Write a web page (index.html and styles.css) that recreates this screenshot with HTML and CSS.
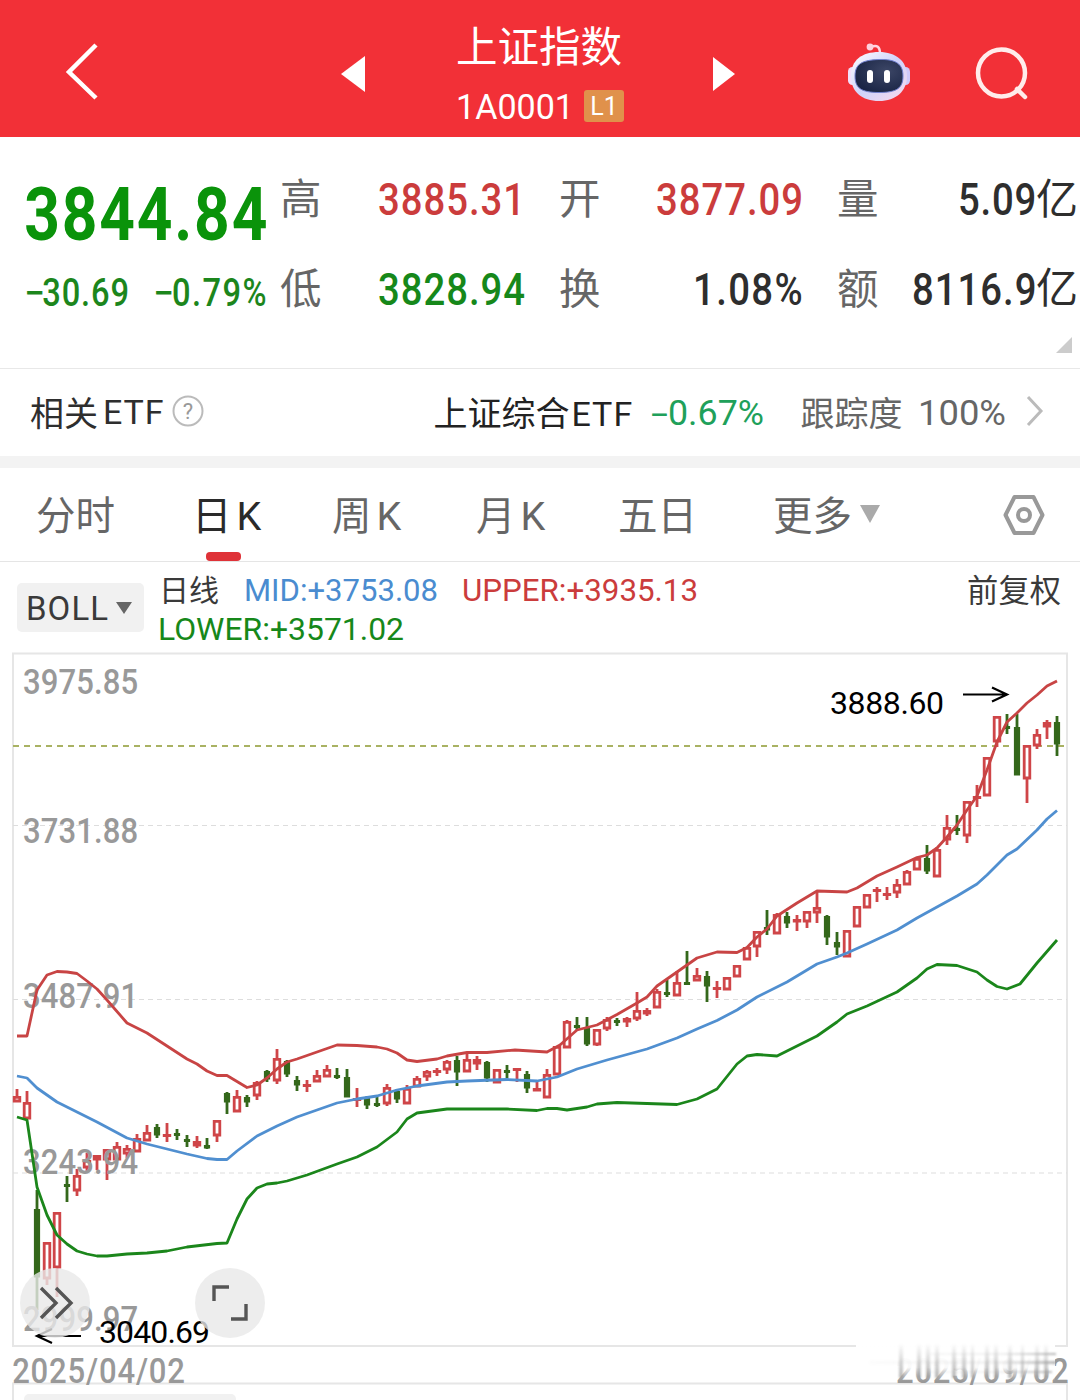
FILE: index.html
```html
<!DOCTYPE html>
<html lang="zh-CN">
<head>
<meta charset="utf-8">
<title>上证指数</title>
<link rel="stylesheet" href="styles.css">
</head>
<body>
<header class="topbar">
  <svg class="back" width="34" height="58" viewBox="0 0 34 58"><path d="M31 2 4 29 31 55"/></svg>
  <svg class="prev" width="24" height="36" viewBox="0 0 24 36"><path d="M24 0V36L0 18Z"/></svg>
  <div class="title">
    <h1>上证指数</h1>
    <div class="code"><svg width="118" height="34"><text x="0" y="30" textLength="118" lengthAdjust="spacingAndGlyphs">1A0001</text></svg><span class="level">L1</span></div>
  </div>
  <svg class="next" width="22" height="34" viewBox="0 0 22 34"><path d="M0 0V34L22 17Z"/></svg>
  <svg class="robot" width="64" height="60" viewBox="0 0 64 60">
    <defs>
      <linearGradient id="shell" x1="0" y1="0" x2="1" y2="1"><stop offset="0" stop-color="#fff"/><stop offset=".5" stop-color="#cfd3fb"/><stop offset="1" stop-color="#fbd9ec"/></linearGradient>
      <radialGradient id="visor" cx=".65" cy=".35" r=".7"><stop offset="0" stop-color="#3c4666"/><stop offset="1" stop-color="#1a2545"/></radialGradient>
    </defs>
    <path d="M24 5Q33 1 33 12" fill="none" stroke="#ffd5e2" stroke-width="2.5"/>
    <circle cx="23" cy="5" r="3.4" fill="#ffd0dc"/>
    <rect x="1" y="25" width="9" height="18" rx="4.500" fill="#f2dffb"/><rect x="54" y="25" width="9" height="18" rx="4.500" fill="#cfc9fa"/>
    <path d="M32 10C49 10 60 19 60 34S49 59 32 59 4 50 4 34 15 10 32 10Z" fill="url(#shell)"/>
    <path d="M32 17.500C49 17 56 22 56 34S50 50.500 32 50.500 8 46 8 34 15 18 32 17.500Z" fill="url(#visor)" stroke="#7181cf"/>
    <rect x="20" y="28" width="6" height="13" rx="3" fill="#fff"/><rect x="37" y="28" width="6" height="13" rx="3" fill="#fff"/>
  </svg>
  <svg class="search" width="56" height="56" viewBox="0 0 56 56"><circle cx="26.500" cy="27" r="23.500"/><path d="M42 43 50 51" stroke-linecap="round"/></svg>
</header>

<section class="quote">
  <div class="price">
    <svg width="242" height="60"><text class="last" x="-1" y="56" transform="scale(.83 1)" textLength="293">3844.84</text></svg>
    <svg width="242" height="34"><g class="change" transform="scale(.86 1)"><text x="20" y="30" textLength="101">30.69</text><text x="-1" y="30" textLength="24" lengthAdjust="spacingAndGlyphs">−</text><text x="149" y="30" textLength="24" lengthAdjust="spacingAndGlyphs">−</text><text x="171" y="30" textLength="110">0.79%</text></g></svg>
  </div>
  <div class="stats">
    <div class="stat"><span>高</span><svg width="146" height="44"><text class="up" transform="scale(.87 1)" y="38" textLength="169">3885.31</text></svg></div>
    <div class="stat"><span>开</span><svg width="146" height="44"><text class="up" transform="scale(.87 1)" y="38" textLength="169">3877.09</text></svg></div>
    <div class="stat wide"><span>量</span><div class="amount"><svg width="78" height="44"><text transform="scale(.87 1)" y="38" textLength="90">5.09</text></svg><b>亿</b></div></div>
    <div class="stat"><span>低</span><svg width="146" height="44"><text class="down" transform="scale(.87 1)" y="38" textLength="169">3828.94</text></svg></div>
    <div class="stat"><span>换</span><svg width="109" height="44"><text transform="scale(.87 1)" y="38" textLength="126">1.08%</text></svg></div>
    <div class="stat wide"><span>额</span><div class="amount"><svg width="124" height="44"><text transform="scale(.87 1)" y="38" textLength="143">8116.9</text></svg><b>亿</b></div></div>
  </div>
  <svg class="corner" width="16" height="16"><path d="M16 0V16H0Z"/></svg>
</section>

<section class="etf">
  <span>相关</span><span class="latin">ETF</span>
  <svg class="help" width="32" height="32"><circle cx="16" cy="16" r="14.500"/><text x="16" y="24" text-anchor="middle">?</text></svg>
  <span class="fund">上证综合<span>ETF</span></span>
  <svg width="113" height="36"><text class="rate" x="0" y="32" textLength="17" lengthAdjust="spacingAndGlyphs">-</text><text class="rate" x="17" y="32" textLength="96" lengthAdjust="spacingAndGlyphs">0.67%</text></svg>
  <span class="track">跟踪度</span>
  <svg width="88" height="36"><text class="pct" x="0" y="32" textLength="88" lengthAdjust="spacingAndGlyphs">100%</text></svg>
  <svg class="more" width="18" height="32"><path d="M2 2 15 16 2 30"/></svg>
</section>

<nav class="tabs">
  <a>分时</a><a class="active">日<i>K</i></a><a>周<i>K</i></a><a>月<i>K</i></a><a>五日</a><a>更多<svg width="20" height="18"><path d="M0 0H20L10 18Z"/></svg></a>
  <svg class="gear" width="42" height="42"><path d="M11.500 3H30.500L39.500 21 30.500 39H11.500L2.500 21Z"/><circle cx="21" cy="21" r="6"/></svg>
</nav>

<section class="indicator">
  <div class="picker"><svg width="82" height="30"><text x="-1" y="27" textLength="82">BOLL</text></svg><svg class="arrow" width="16" height="12"><path d="M0 0H16L8 12Z"/></svg></div>
  <div class="readout">
    <div class="line"><span>日线</span><svg class="mid" width="193" height="34"><text x="-1" y="28" textLength="194" lengthAdjust="spacingAndGlyphs">MID:+3753.08</text></svg><svg class="upper" width="235" height="34"><text x="-1" y="28" textLength="236" lengthAdjust="spacingAndGlyphs">UPPER:+3935.13</text></svg></div>
    <div class="line"><svg class="lower" width="245" height="34"><text x="-1" y="28" textLength="246" lengthAdjust="spacingAndGlyphs">LOWER:+3571.02</text></svg></div>
  </div>
  <span class="adjust">前复权</span>
</section>

<main class="chart">
  <svg width="1080" height="748" viewBox="0 652 1080 748">
    <defs>
      <linearGradient id="fade" x1="0" y1="0" x2="0" y2="1"><stop offset="0" stop-color="#fff"/><stop offset=".62" stop-color="#fff" stop-opacity=".95"/><stop offset=".9" stop-color="#fff" stop-opacity=".2"/><stop offset="1" stop-color="#fff" stop-opacity="0"/></linearGradient>
      <linearGradient id="streak" x1="0" y1="0" x2="0" y2="1"><stop offset="0" stop-color="#999" stop-opacity=".05"/><stop offset="1" stop-color="#999" stop-opacity=".7"/></linearGradient>
      <linearGradient id="haze" gradientUnits="userSpaceOnUse" x1="870" y1="0" x2="1056" y2="0"><stop offset="0" stop-color="#aaa" stop-opacity=".04"/><stop offset=".7" stop-color="#aaa" stop-opacity=".16"/><stop offset="1" stop-color="#999" stop-opacity=".7"/></linearGradient>
      <filter id="soft"><feGaussianBlur stdDeviation="1"/></filter>
    </defs>
    <g class="frame"><path d="M13 653.500H1067V1346H13Z"/><path d="M13 1400V1383.500H1067V1400"/></g>
    <rect x="24" y="1394" width="212" height="12" rx="5" fill="#f1f1f1"/>
    <path class="grid" d="M13 825.500H1067M13 999.500H1067M13 1173H1067"/>
    <path class="current" d="M13 746H1067"/>
    <g id="candles"></g>
    <g class="scale" transform="scale(.9 1)">
      <text x="25.500" y="694" textLength="128">3975.85</text>
      <text x="25.500" y="843" textLength="128">3731.88</text>
      <text x="25.500" y="1008" textLength="128">3487.91</text>
      <text x="25.500" y="1174" textLength="128">3243.94</text>
      <text x="25.500" y="1331" textLength="128">2999.97</text>
      <text x="13.500" y="1383" textLength="192">2025/04/02</text>
      <text x="995.500" y="1383" textLength="192">2025/09/02</text>
    </g>
    <rect x="856" y="1345" width="199" height="36" fill="url(#fade)"/>
    <g filter="url(#soft)">
      <path fill="url(#streak)" d="M899 1345h4v33h-4zM917 1345h4v33h-4zM926 1345h4v33h-4zM935 1345h4v33h-4zM952 1345h4v33h-4zM962 1345h4v33h-4zM971 1345h3v33h-3zM985 1345h4v33h-4zM994 1345h4v33h-4zM1008 1345h4v33h-4zM1021 1345h3v33h-3zM1035 1345h4v33h-4zM1044 1345h4v33h-4z"/>
      <path fill="url(#haze)" d="M870 1361H1056V1364H870zM930 1353H1056V1355H930zM930 1371H1052V1373H930z"/>
    </g>
    <path class="band upper-band" d="M17 1036H27L37 990 47 975 57 971.500 67 972 77 973.500 87 981 97 989 107 1000 127 1023 147 1033 167 1046 187 1059 197 1064 207 1071 217 1075.500H227L237 1081.500 247 1087.500 257 1085 267 1078 277 1069 287 1062 297 1059 317 1052 337 1045 357 1045.500 377 1047 387 1049 397 1053 407 1060 417 1061.500 437 1059 447 1056 467 1052.500 487 1052.500 515 1050 547 1052 560 1045 577 1030 597 1025 617 1014.500 637 1003 647 997 657 986 677 972 697 958 717 952 737 952.500 747 947.500 757 937 767 929 777 916 797 903 817 891 847 892 857 888 877 876 897 867 917 857.500 927 855 937 848 947 837 957 825 967 810 977 796 987 770 997 742 1007 722 1017 713 1027 703 1037 695 1047 686 1057 681"/>
    <path class="band mid-band" d="M17 1076 27 1078 37 1088 57 1102 67 1107 77 1112 97 1122 127 1138 147 1144 167 1149 187 1154 207 1158.500 217 1159.500H227L237 1151 257 1136 277 1126 297 1117 317 1110 337 1103 357 1099 377 1096 397 1090 417 1086 447 1082 467 1081 507 1079.500 537 1081 557 1077 577 1069 607 1060 647 1049 677 1038 697 1029 717 1020.500 737 1010 757 997 787 982 817 964 837 957 847 953 867 944 897 930 917 918 957 896 977 884 987 875 1007 855 1017 849 1037 830 1047 819 1057 810.500"/>
    <path class="band lower-band" d="M17 1117 27 1120 37 1187 47 1215 57 1235 67 1244 77 1251 87 1254 97 1256H107L127 1254 147 1253 167 1251 187 1247 217 1243.500 227 1243 237 1219 247 1199 257 1188 267 1184 277 1183 287 1181 307 1175 337 1164 357 1157 377 1147 397 1132 407 1119 417 1113 447 1109H507L537 1110.500 547 1108.500H557L567 1110 587 1107 597 1104 617 1102.500 647 1103.500 677 1104.500 697 1099 717 1089 737 1064 747 1056 757 1054.500 777 1056 787 1051 817 1036 837 1022 847 1014 867 1006 897 992 917 978 927 969 937 964.500 957 965.500 977 972 987 980 997 986.500 1007 989 1020 984 1037 963 1057 940"/>
    <g class="extreme">
      <text x="830" y="714" textLength="114">3888.60</text><path d="M963 694.500H1006M992 687.500 1007 694.500 992 701.500"/>
      <text x="99" y="1343" textLength="111">3040.69</text><path d="M81 1336H38M52 1329 37 1336 52 1343"/>
    </g>
    <g class="tool"><circle cx="55" cy="1303" r="35"/><path d="M41 1288 56 1303 41 1318M56 1288 71 1303 56 1318"/></g>
    <g class="tool"><circle cx="230" cy="1303" r="35"/><path d="M214 1301V1287H229M231 1319H246V1304"/></g>
  </svg>
</main>
<script src="chart.js"></script>
</body>
</html>
```
FILE: styles.css
```css
* { box-sizing: border-box; }
body { margin: 0; width: 1080px; height: 1400px; overflow: hidden; background: #fff; color: #2e2e2e; font-family: Roboto, "Noto Sans CJK SC", sans-serif; }
svg { display: block; flex: none; overflow: visible; }

.topbar { height: 137px; background: #f23037; display: flex; align-items: flex-start; color: #fff; }
.topbar path { fill: #fff; }
.back { margin: 43px 0 0 65px; }
.back path { fill: none; stroke: #fff; stroke-width: 4.500; }
.prev { margin: 56px 0 0 242px; }
.title { margin-left: 91px; width: 170px; padding-top: 19px; }
.title h1 { margin: 0; font-size: 41.500px; line-height: 58px; font-weight: 400; white-space: nowrap; }
.code { display: flex; align-items: center; margin-top: 12px; }
.code text { font-size: 35px; fill: #fff; }
.level { margin-left: 10px; width: 40px; height: 32px; border-radius: 3px; background: #e0914b; font-size: 25px; line-height: 33px; text-align: center; }
.next { margin: 57px 0 0 87px; }
.robot { margin: 42px 0 0 112px; }
.robot path:nth-of-type(1) { fill: none; }
.robot path:nth-of-type(2) { fill: url(#shell); }
.robot path:nth-of-type(3) { fill: url(#visor); }
.search { margin: 46px 0 0 64px; }
.search circle, .search path { fill: none; stroke: #ffeceb; stroke-width: 4.500; }

.quote { height: 232px; border-bottom: 1px solid #e8e8e8; display: flex; position: relative; padding-top: 17px; }
.price { width: 280px; padding: 30px 0 0 25px; }
.price svg + svg { margin-top: 32px; }
.last { font-size: 75px; font-weight: 700; fill: #0a930a; }
.change { font-size: 38px; font-weight: 500; fill: #1c861c; }
.stats { display: grid; grid-template-columns: 279px 278px 241px; grid-template-rows: 90px 89px; }
.stat { display: flex; align-items: center; justify-content: space-between; padding-right: 35px; }
.stat.wide { padding-right: 0; }
.stat > span { font-size: 41.500px; color: #666; line-height: 60px; padding-top: 2px; }
.stat text { font-size: 44px; font-weight: 500; fill: #2e2e2e; }
.stat .up { fill: #cb3c3c; }
.stat .down { fill: #16881a; }
.amount { display: flex; align-items: center; font-size: 42px; line-height: 60px; }
.amount b { font-weight: 400; padding-top: 1px; }
.corner { position: absolute; right: 8px; bottom: 15px; fill: #ccc; }

.etf { height: 87px; display: flex; align-items: center; padding: 0 0 3px 30px; font-size: 34px; white-space: nowrap; }
.latin { margin-left: 5px; letter-spacing: .9px; padding-top: 1px; }
.help { margin-left: 8px; }
.help circle { fill: none; stroke: #bbb; stroke-width: 2; }
.help text { font-size: 22px; fill: #999; }
.fund { margin-left: 229px; width: 201px; color: #222; }
.fund span { margin-left: 2px; letter-spacing: 1px; }
.etf .fund + svg { margin-left: 17px; }
.etf text { font-size: 35px; }
.etf .help text { font-size: 22px; }
.rate { fill: #20a05a; }
.track { margin-left: 36px; color: #666; width: 104px; }
.track + svg { margin-left: 14px; }
.pct { fill: #666; }
.more { margin-left: 20px; }
.more path { fill: none; stroke: #bbb; stroke-width: 3; }

.tabs { height: 106px; border-top: 12px solid #f3f3f3; border-bottom: 1px solid #e5e5e5; display: grid; grid-template-columns: 156px 140px 144px 142px 155px 230px auto; padding-left: 36px; align-items: center; font-size: 39.500px; color: #666; }
.tabs a { line-height: 93px; height: 93px; padding-top: 3px; white-space: nowrap; position: relative; display: flex; align-items: center; }
.tabs i { font-style: normal; margin-left: 5px; }
.tabs a svg { margin: -5px 0 0 8px; fill: #aaa; }
.tabs .active { color: #2a2a2a; }
.tabs .active::after { content: ""; position: absolute; left: 14px; bottom: 0; width: 35px; height: 9px; border-radius: 4px; background: #df3238; }
.gear { fill: none; stroke: #999; stroke-width: 4; stroke-linejoin: round; }

.indicator { height: 90px; display: flex; align-items: flex-start; padding: 8px 19px 0 17px; color: #3a3a3a; }
.picker { margin-top: 13px; width: 127px; height: 49px; border-radius: 5px; background: #f1f1f1; display: flex; align-items: center; padding-left: 10px; gap: 7px; }
.picker text { font-size: 33px; fill: #3a3a3a; }
.picker path { fill: #666; }
.readout { margin-left: 15px; flex: 1; }
.line { display: flex; align-items: center; height: 39px; font-size: 30px; }
.line span { margin-top: -4px; }
.line text { font-size: 32px; }
.mid { margin-left: 26px; fill: #4a8cd0; }
.upper { margin-left: 25px; fill: #cb3c3c; }
.lower { fill: #16881a; }
.adjust { font-size: 31.300px; line-height: 43px; }

.chart { height: 748px; }
.frame path { fill: none; stroke: #e6e6e6; stroke-width: 2; }
.grid { stroke: #ddd; stroke-dasharray: 5 4; }
.current { stroke: #a9b263; stroke-width: 2; stroke-dasharray: 6 5; }
.scale text { font-size: 34.500px; font-weight: 500; fill: #999; }
.band { fill: none; stroke-width: 2.800; stroke-linejoin: round; }
.upper-band { stroke: #c84444; }
.mid-band { stroke: #508fd0; }
.lower-band { stroke: #1b861b; }
.rise { fill: none; stroke: #cf4548; stroke-width: 2.800; }
.fall { fill: #34681b; stroke: #34681b; stroke-width: 2.800; }
.extreme text { font-size: 32px; fill: #000; }
.extreme path { fill: none; stroke: #000; stroke-width: 2.200; }
.tool circle { fill: #e9e9e9; fill-opacity: .8; }
.tool path { fill: none; stroke: #555; stroke-width: 3.400; }
```
FILE: chart.js
```js
// One row per trading day: direction (r rise, g fall), high, body top, body bottom, low
const days = `r 1089 1096 1102 1102|r 1091 1102 1119 1119|g 1190 1209 1277 1310|r 1242 1242 1279 1285|r 1212 1212 1268 1297
g 1176 1184 1186 1202|r 1169 1175 1191 1196|r 1153 1160 1168 1172|r 1155 1155 1160 1170|r 1149 1149 1160 1180
r 1142 1146 1160 1160|r 1145 1148 1154 1158|r 1134 1138 1152 1152|r 1125 1132 1141 1141|g 1124 1127 1135 1138
r 1123 1134 1135 1142|g 1129 1133 1135 1140|g 1135 1139 1141 1147|r 1136 1141 1146 1148|g 1138 1145 1148 1149
r 1120 1120 1136 1142|g 1092 1093 1102 1114|r 1090 1096 1112 1112|g 1095 1097 1102 1107|r 1081 1082 1096 1100
g 1070 1071 1079 1082|r 1049 1058 1081 1084|g 1060 1061 1074 1077|g 1076 1080 1085 1091|r 1080 1084 1086 1092
r 1070 1075 1082 1082|r 1065 1069 1077 1077|g 1068 1075 1077 1079|g 1069 1077 1097 1097|r 1088 1098 1100 1107
g 1096 1097 1105 1109|g 1097 1103 1105 1107|r 1084 1087 1104 1106|g 1089 1091 1099 1103|r 1085 1088 1104 1104
r 1076 1078 1087 1087|r 1070 1071 1077 1081|r 1068 1070 1072 1076|r 1060 1061 1070 1074|g 1056 1060 1072 1086
r 1052 1059 1072 1072|r 1056 1059 1064 1070|g 1061 1062 1078 1082|r 1069 1069 1083 1083|g 1065 1070 1072 1078
r 1068 1068 1070 1082|g 1071 1074 1088 1093|r 1080 1088 1091 1091|r 1069 1074 1098 1098|r 1046 1046 1075 1075
r 1020 1021 1048 1048|g 1017 1025 1027 1030|g 1017 1028 1044 1046|r 1029 1029 1045 1046|r 1017 1019 1029 1031
g 1018 1020 1022 1026|r 1017 1018 1022 1027|r 992 1010 1019 1021|r 1008 1010 1014 1016|r 989 991 1008 1008
g 980 992 994 997|r 971 982 996 996|g 951 982 984 985|r 968 975 981 981|g 971 976 986 1002
r 981 987 989 998|r 977 977 990 990|r 965 965 977 977|r 947 947 960 960|r 931 931 947 957
g 910 927 930 935|r 913 914 934 934|g 912 916 923 928|r 915 919 922 931|r 911 911 922 928
r 891 907 913 923|g 915 916 937 945|g 932 942 947 955|r 930 930 957 957|r 906 906 927 927
r 894 894 908 908|r 887 889 891 902|r 887 893 895 900|r 879 884 893 898|r 870 871 885 885
r 857 858 870 870|g 845 858 871 874|r 847 849 877 877|r 815 827 840 845|g 815 828 830 835
r 801 801 836 843|r 785 796 797 807|r 757 757 796 796|r 716 716 742 747|g 714 726 728 734
g 714 727 775 775|r 745 745 779 803|r 729 734 746 749|r 720 722 727 739|g 716 722 744 756`.split(/[|\n]/);

const layer = document.getElementById("candles");
days.forEach((day, i) => {
  const [kind, ...values] = day.split(" ");
  const [high, top, bottom, low] = values.map(Number);
  const x = 17 + i * 10;
  const half = kind === "r" ? 2.8 : 1.7;
  const a = top + 1.3;
  const b = Math.max(a + 0.3, bottom - 1);
  const path = document.createElementNS("http://www.w3.org/2000/svg", "path");
  path.setAttribute("class", kind === "r" ? "rise" : "fall");
  path.setAttribute("d", `M${x - half} ${a}H${x + half}V${b}H${x - half}ZM${x} ${high}V${a}M${x} ${b}V${low}`);
  layer.appendChild(path);
});
```
